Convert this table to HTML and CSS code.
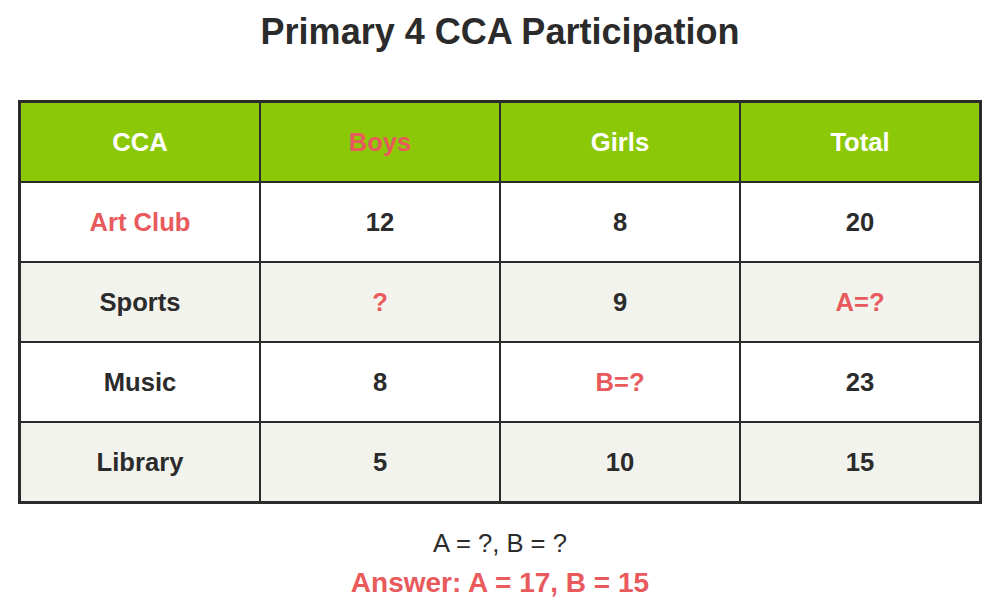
FILE: index.html
```html
<!DOCTYPE html>
<html lang="en">
<head>
<meta charset="utf-8">
<title>Primary 4 CCA Participation</title>
<link rel="stylesheet" href="styles.css">
</head>
<body>
<div class="page">
  <h1 class="title">Primary 4 CCA Participation</h1>
  <div class="table">
    <div class="cell head">CCA</div>
    <div class="cell head red">Boys</div>
    <div class="cell head">Girls</div>
    <div class="cell head">Total</div>

    <div class="cell red">Art Club</div>
    <div class="cell">12</div>
    <div class="cell">8</div>
    <div class="cell">20</div>

    <div class="cell alt">Sports</div>
    <div class="cell alt red">?</div>
    <div class="cell alt">9</div>
    <div class="cell alt red">A=?</div>

    <div class="cell">Music</div>
    <div class="cell">8</div>
    <div class="cell red">B=?</div>
    <div class="cell">23</div>

    <div class="cell alt">Library</div>
    <div class="cell alt">5</div>
    <div class="cell alt">10</div>
    <div class="cell alt">15</div>
  </div>
  <p class="question">A = ?, B = ?</p>
  <p class="answer">Answer: A = 17, B = 15</p>
</div>
</body>
</html>
```
FILE: styles.css
```css
html, body {
  margin: 0;
  padding: 0;
  background: #ffffff;
}
body {
  font-family: "Liberation Sans", Arial, sans-serif;
  color: #2b2b2b;
}
.page {
  padding: 12px 18px 0;
  display: flex;
  flex-direction: column;
}
.title {
  margin: 0 0 48px;
  font-size: 36px;
  line-height: 40px;
  font-weight: bold;
  text-align: center;
  color: #2b2b2b;
}
.table {
  display: grid;
  grid-template-columns: repeat(4, 1fr);
  grid-auto-rows: 78px;
  gap: 2px;
  border: 3px solid #2b2b2b;
  background: #2b2b2b;
}
.cell {
  background: #ffffff;
  display: flex;
  align-items: center;
  justify-content: center;
  font-size: 25.6px;
  font-weight: bold;
  color: #2b2b2b;
}
.cell.alt {
  background: #f3f3ee;
}
.cell.head {
  background: #8bc808;
  color: #ffffff;
}
.cell.red,
.cell.head.red {
  color: #e85a5c;
}
.question {
  margin: 23px 0 0;
  font-size: 25.6px;
  line-height: 32px;
  text-align: center;
  color: #2b2b2b;
}
.answer {
  margin: 6px 0 0;
  font-size: 28px;
  line-height: 36px;
  font-weight: bold;
  text-align: center;
  color: #e85a5c;
}
```
